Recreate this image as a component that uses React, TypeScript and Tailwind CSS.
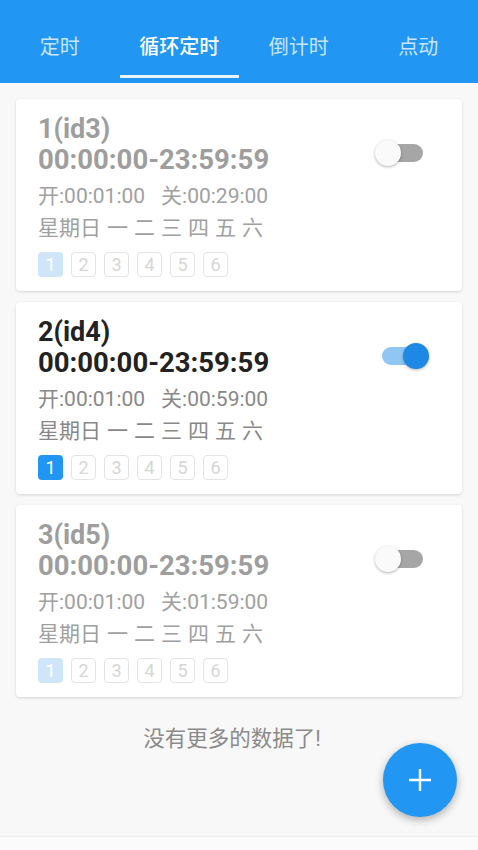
import React from "react";

const tabs = ["定时", "循环定时", "倒计时", "点动"];

const timers = [
  { no: 1, id: 3, on: false, off: "00:29:00" },
  { no: 2, id: 4, on: true, off: "00:59:00" },
  { no: 3, id: 5, on: false, off: "01:59:00" },
];

const font = { fontFamily: "Roboto, 'Noto Sans CJK SC', sans-serif" };

function Toggle({ on }: { on: boolean }) {
  return (
    <div className="relative h-[26px] w-[54px]">
      <div
        className={`absolute left-[7px] top-[4px] h-[18px] w-[41px] rounded-full ${
          on ? "bg-[#8fc6f3]" : "bg-[#a6a6a6]"
        }`}
      />
      <div
        className={`absolute top-0 h-[26px] w-[26px] rounded-full shadow-[0_1px_3px_rgba(0,0,0,0.3)] ${
          on ? "right-0 bg-[#1e88e5]" : "left-0 bg-[#fafafa]"
        }`}
      />
    </div>
  );
}

function TimerCard({ t }: { t: (typeof timers)[number] }) {
  const main = t.on ? "text-[#222]" : "text-[#9e9e9e]";
  const sub = t.on ? "text-[#888]" : "text-[#a0a0a0]";
  return (
    <article className="flex justify-between rounded-[4px] bg-white pb-[14px] pl-[22px] pr-[33px] pt-[15px] shadow-[0_1px_3px_rgba(0,0,0,0.14)]">
      <div>
        <div className={`text-[27px] font-bold leading-[30px] ${main}`}>
          {t.no}(id{t.id})
        </div>
        <div className={`text-[27.5px] font-bold leading-[32px] ${main}`}>
          00:00:00-23:59:59
        </div>
        <div className={`mt-[4px] flex gap-[16px] text-[21px] leading-[32px] ${sub}`}>
          <span>开:00:01:00</span>
          <span>关:{t.off}</span>
        </div>
        <div className={`flex gap-[6px] text-[21px] leading-[32px] ${sub}`}>
          {["星期日", "一", "二", "三", "四", "五", "六"].map((d) => (
            <span key={d}>{d}</span>
          ))}
        </div>
        <div className="mt-[8px] flex gap-[8px]">
          {[1, 2, 3, 4, 5, 6].map((n) =>
            n === 1 ? (
              <span
                key={n}
                className={`flex h-[25px] w-[25px] items-center justify-center rounded-[4px] text-[18px] text-white ${
                  t.on ? "bg-[#2196f3]" : "bg-[#cfe6fa]"
                }`}
              >
                {n}
              </span>
            ) : (
              <span
                key={n}
                className="flex h-[25px] w-[25px] items-center justify-center rounded-[4px] border border-[#e4e4e4] text-[18px] text-[#d6d6d6]"
              >
                {n}
              </span>
            )
          )}
        </div>
      </div>
      <div className="mt-[26px]">
        <Toggle on={t.on} />
      </div>
    </article>
  );
}

export default function App() {
  return (
    <div className="relative h-[850px] w-[478px] overflow-hidden bg-[#f8f8f8]" style={font}>
      <header className="flex h-[83px] bg-[#2196f3] pt-[30px]">
        {tabs.map((tab, i) => (
          <div key={tab} className="flex flex-1 flex-col items-center">
            <span
              className={`text-[20px] leading-[34px] ${
                i === 1 ? "font-medium text-white" : "text-[#c8e6fd]"
              }`}
            >
              {tab}
            </span>
            {i === 1 && <div className="mt-[11px] h-[3px] w-full bg-[#e8f5ff]" />}
          </div>
        ))}
      </header>

      <main className="flex flex-col gap-[11px] px-[16px] pt-[16px]">
        {timers.map((t) => (
          <TimerCard key={t.id} t={t} />
        ))}
      </main>

      <p className="mt-[28px] pr-[14px] text-center text-[21.5px] leading-[28px] text-[#8a8a8a]">
        没有更多的数据了!
      </p>

      <div className="absolute bottom-0 left-0 right-0 h-[14px] border-t border-[#efefef] bg-[#fbfbfb]" />

      <button className="absolute left-[383px] top-[743px] flex h-[74px] w-[74px] items-center justify-center rounded-full bg-[#2196f3] shadow-[0_3px_8px_rgba(0,0,0,0.3)]">
        <svg width="26" height="26" viewBox="0 0 26 26" fill="none" stroke="white" strokeWidth="2.4">
          <path d="M13 2v22M2 13h22" />
        </svg>
      </button>
    </div>
  );
}
